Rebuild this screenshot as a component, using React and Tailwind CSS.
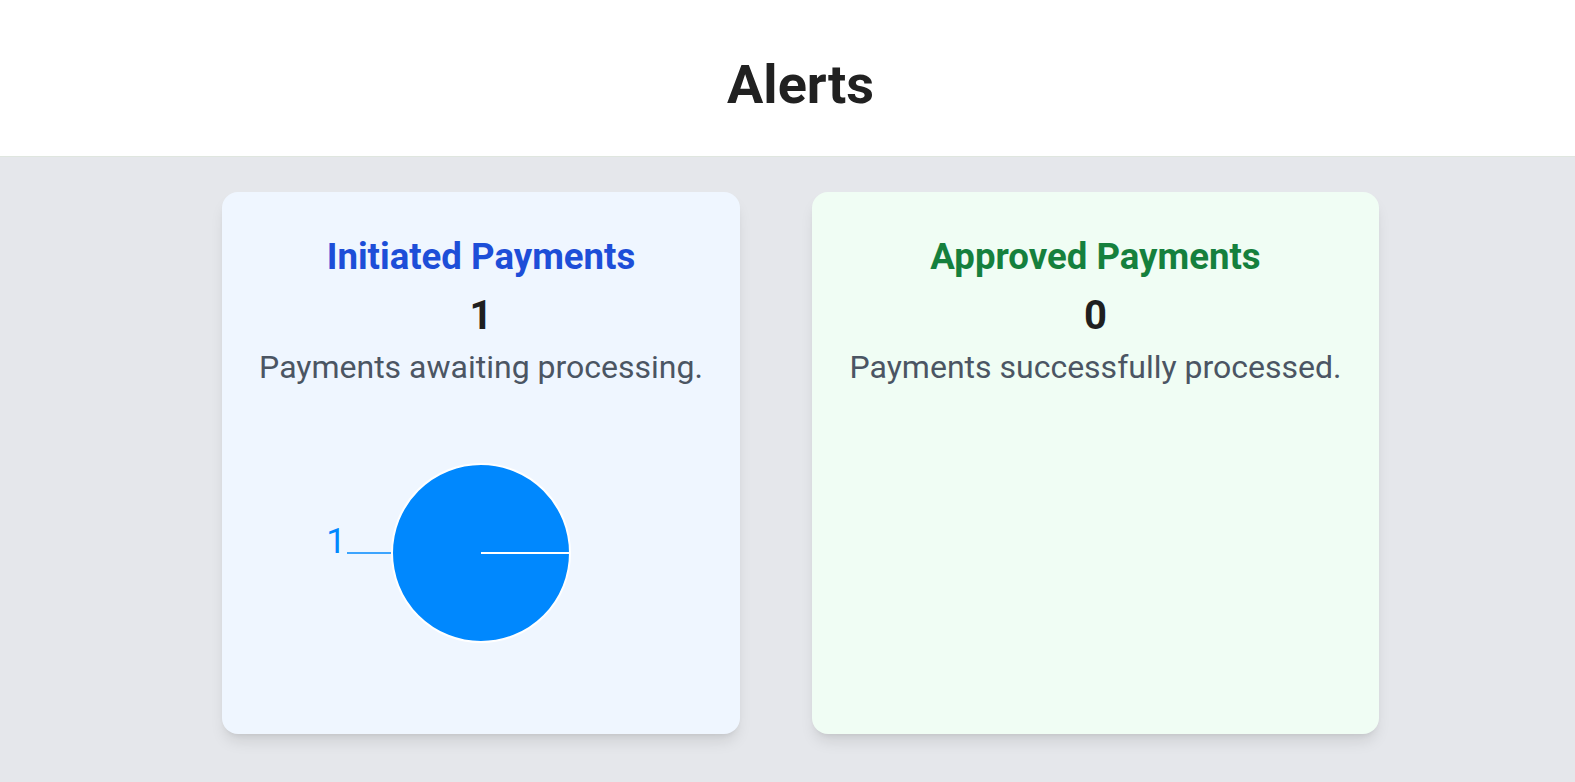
const CARDS = [
  {
    title: "Initiated Payments",
    count: 1,
    text: "Payments awaiting processing.",
    width: "w-[518px]",
    bg: "bg-[#eff6ff]",
    titleColor: "text-[#1d4ed8]",
    chart: true,
  },
  {
    title: "Approved Payments",
    count: 0,
    text: "Payments successfully processed.",
    width: "w-[567px]",
    bg: "bg-[#f0fdf4]",
    titleColor: "text-[#15803d]",
    chart: false,
  },
];

function PieChart({ value }) {
  // single full slice, recharts-like: white edge, seam line at 0°, label on the left
  const cx = 200;
  const cy = 120;
  const r = 89;
  return (
    <svg width="400" height="240" viewBox="0 0 400 240" className="mx-auto block">
      <circle cx={cx} cy={cy} r={r} fill="#0088FE" stroke="#ffffff" strokeWidth="2" />
      <line x1={cx} y1={cy} x2={cx + r} y2={cy} stroke="#ffffff" strokeWidth="2" />
      <line x1={cx - r - 1} y1={cy} x2={cx - r - 45} y2={cy} stroke="#0088FE" strokeWidth="1.5" />
      <text x={cx - r - 46} y={cy} textAnchor="end" fill="#0088FE" fontSize="35" fontFamily="Roboto, sans-serif">
        {value}
      </text>
    </svg>
  );
}

export default function App() {
  return (
    <div className="min-h-screen bg-[#e5e7eb] font-['Roboto',sans-serif]">
      <header className="flex h-[157px] items-center justify-center border-b border-[#dfe6df] bg-white pl-[26px] pt-[12px]">
        <h1 className="text-[54px] font-bold text-[#212121]">Alerts</h1>
      </header>

      <main className="flex items-stretch justify-center gap-[72px] pl-[26px] pt-[35px] pb-[48px]">
        {CARDS.map((c) => (
          <div
            key={c.title}
            className={`${c.width} ${c.bg} flex h-[542px] flex-col items-center rounded-2xl pt-[43px] text-center shadow-lg`}
          >
            <h2 className={`text-[36.6px] font-bold leading-[44px] ${c.titleColor}`}>{c.title}</h2>
            <p className="mt-[15px] text-[40px] font-bold leading-[44px] text-[#1f1f1f]">{c.count}</p>
            <p className="mt-[10px] text-[32px] leading-[38px] text-[#4b5563]">{c.text}</p>
            {c.chart && (
              <div className="mt-[47px]">
                <PieChart value={c.count} />
              </div>
            )}
          </div>
        ))}
      </main>
    </div>
  );
}
